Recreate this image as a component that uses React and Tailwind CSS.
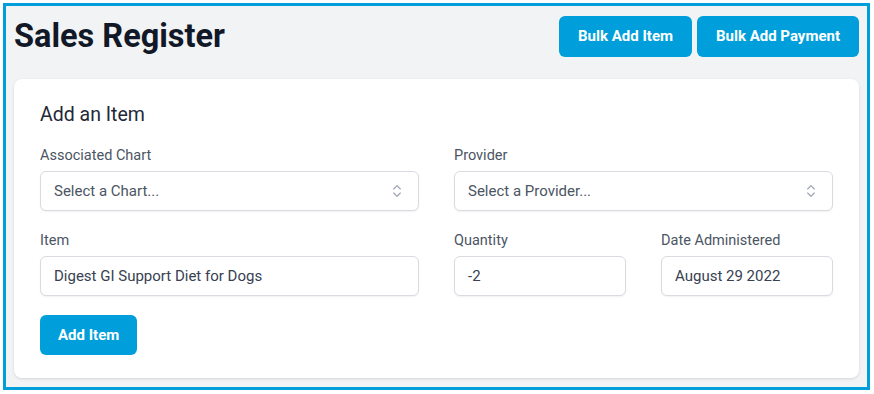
import { ChevronsUpDown } from 'lucide-react';

const font = { fontFamily: 'Roboto, "Noto Sans", Arial, sans-serif' };

function Field({ label, children, className = '' }) {
  return (
    <div className={className}>
      <label className="block text-[14.5px] leading-5 text-[#4b5563] mb-[5px]">{label}</label>
      {children}
    </div>
  );
}

function SelectBox({ placeholder }) {
  return (
    <div className="h-10 flex items-center justify-between rounded-md border border-[#d8dbe0] bg-white pl-[13px] pr-[13px] text-[15px] text-[#4b5563] shadow-[0_1px_2px_rgba(0,0,0,0.06)]">
      <span>{placeholder}</span>
      <ChevronsUpDown size={16} strokeWidth={1.75} className="text-[#9ca3af]" />
    </div>
  );
}

function TextBox({ value }) {
  return (
    <div className="h-10 flex items-center rounded-md border border-[#d8dbe0] bg-white px-[13px] text-[15px] text-[#374151] shadow-[0_1px_2px_rgba(0,0,0,0.06)]">
      {value}
    </div>
  );
}

export default function App() {
  return (
    <div className="w-[874px] h-[394px] bg-white p-[3px]" style={font}>
      <div className="w-[867px] h-[387px] border-[3px] border-[#009fdb] bg-[#f2f3f5] px-[8px] pt-[10px]">
        <div className="flex items-center justify-between">
          <h1 className="text-[32.5px] font-bold text-[#111827] leading-none">Sales Register</h1>
          <div className="flex gap-[5px]">
            <button className="h-[41px] px-[19px] rounded-md bg-[#009fdb] text-white text-[15px] font-bold">
              Bulk Add Item
            </button>
            <button className="h-[41px] px-[19px] rounded-md bg-[#009fdb] text-white text-[15px] font-bold">
              Bulk Add Payment
            </button>
          </div>
        </div>

        <div className="mt-[22px] bg-white rounded-lg shadow-[0_1px_3px_rgba(0,0,0,0.12)] px-[26px] pt-[22px] pb-[23px]">
          <h2 className="text-[19.5px] leading-7 text-[#1f2937] mb-[17px]">Add an Item</h2>
          <div className="grid grid-cols-4 gap-x-[35px] gap-y-[20px]">
            <Field label="Associated Chart" className="col-span-2">
              <SelectBox placeholder="Select a Chart..." />
            </Field>
            <Field label="Provider" className="col-span-2">
              <SelectBox placeholder="Select a Provider..." />
            </Field>
            <Field label="Item" className="col-span-2">
              <TextBox value="Digest GI Support Diet for Dogs" />
            </Field>
            <Field label="Quantity">
              <TextBox value="-2" />
            </Field>
            <Field label="Date Administered">
              <TextBox value="August 29 2022" />
            </Field>
          </div>
          <button className="mt-[19px] h-10 px-[18px] rounded-md bg-[#009fdb] text-white text-[15px] font-bold">
            Add Item
          </button>
        </div>
      </div>
    </div>
  );
}
